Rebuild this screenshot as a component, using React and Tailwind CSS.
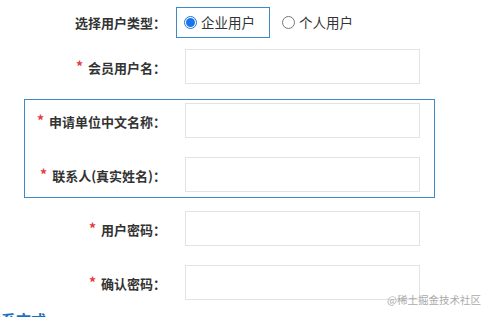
import React from "react";

const font = { fontFamily: '"Noto Sans CJK SC", "Liberation Sans", sans-serif' };

function Label({ children, required, width = "w-[166px]" }) {
  return (
    <div className={`${width} shrink-0 text-right text-[13px] font-bold text-[#333] leading-none`}>
      {required && <span className="text-[#e4393c] text-[14px] mr-[5px] relative -top-[1px]">*</span>}
      {children}
    </div>
  );
}

function Field({ label, width }) {
  return (
    <div className="flex items-center">
      <Label required width={width}>{label}</Label>
      <input className="ml-[19px] w-[235px] h-[35px] border border-[#e3e3e3] bg-white outline-none" />
    </div>
  );
}

export default function App() {
  return (
    <div className="relative w-[489px] h-[317px] overflow-hidden bg-white" style={font}>
      {/* user type */}
      <div className="mt-[7px] flex items-center h-[31px]">
        <Label>选择用户类型：</Label>
        <div className="ml-[10px] w-[94px] h-[31px] border border-[#3d8ac9] flex items-center pl-[7px]">
          <span className="w-[13px] h-[13px] rounded-full border border-[#1a73e8] flex items-center justify-center">
            <span className="w-[9px] h-[9px] rounded-full bg-[#1a73e8]" />
          </span>
          <span className="ml-[4px] text-[13.5px] text-[#333]">企业用户</span>
        </div>
        <span className="ml-[12px] w-[13px] h-[13px] rounded-full border border-[#767676]" />
        <span className="ml-[4px] text-[13.5px] text-[#333]">个人用户</span>
      </div>

      <div className="mt-[11px]">
        <Field label="会员用户名：" />
      </div>

      <div className="mt-[15px] ml-[24px] w-[411px] h-[99px] border border-[#3d8ac9] pt-[3px]">
        <Field label="申请单位中文名称：" width="w-[141px]" />
        <div className="mt-[19px]">
          <Field label="联系人(真实姓名)：" width="w-[141px]" />
        </div>
      </div>

      <div className="mt-[13px]">
        <Field label="用户密码：" />
      </div>
      <div className="mt-[19px]">
        <Field label="确认密码：" />
      </div>

      <div className="mt-[12px] -ml-[14px] text-[15px] font-bold text-[#1e6fc0] leading-none whitespace-nowrap">联系方式</div>

      <div className="absolute left-[387px] top-[295px] text-[10.5px] text-[#aaa] leading-none whitespace-nowrap">@稀土掘金技术社区</div>
    </div>
  );
}
